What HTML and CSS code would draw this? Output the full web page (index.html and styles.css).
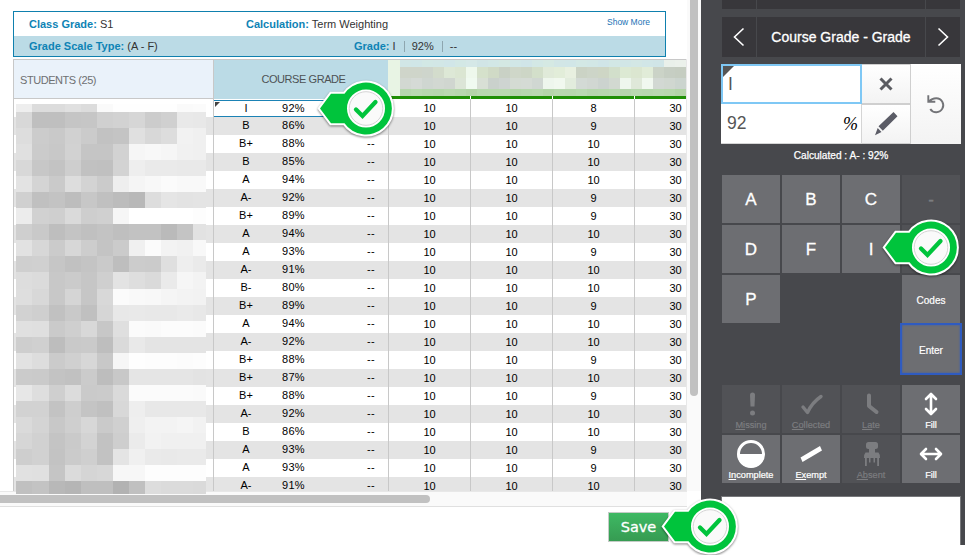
FILE: index.html
```html
<!DOCTYPE html>
<html lang="en">
<head>
    <meta charset="UTF-8">
    <meta name="viewport" content="width=device-width, initial-scale=1.0">
    <title>Gradebook</title>
    <link rel="stylesheet" href="styles.css">
</head>
<body>
    <svg class="defs" width="0" height="0">
        <symbol id="callout" viewBox="0 0 80 62">
            <path class="callout-edge" d="M4 30.500L15 15.700H28.500A26 26 0 1 1 28.500 45.300H15Z"/>
            <path class="callout-fill" d="M4 30.500L15 15.700H28.500A26 26 0 1 1 28.500 45.300H15Z"/>
            <circle cx="50" cy="30.500" r="17.800" fill="#fafafa" stroke="#fff" stroke-width="2.400"/>
            <circle cx="50" cy="30.500" r="16.800" fill="none" stroke="#d4d4d4" stroke-width="1"/>
            <path d="M40 31.500l6.500 6.500 13-14" fill="none" stroke="#00c43c" stroke-width="4.300" stroke-linecap="round"/>
        </symbol>
    </svg>

    <div class="page">
        <div class="gradebook">
            <div class="content">
                <div class="summary">
                    <div class="summary-row">
                        <div class="summary-left"><b>Class Grade:</b> S1</div>
                        <div class="summary-calc"><b>Calculation:</b> Term Weighting</div>
                        <a class="show-more">Show More</a>
                    </div>
                    <div class="summary-row shaded">
                        <div class="summary-scale"><b>Grade Scale Type:</b> (A - F)</div>
                        <div class="summary-grade"><b>Grade:</b> I <i></i> 92% <i></i> --</div>
                    </div>
                </div>

                <div class="grid">
                    <div class="students">
                        <div class="students-head">STUDENTS (25)</div>
                        <div class="students-body">
                            <div class="names" id="names"></div>
                        </div>
                    </div>
                    <div class="course">
                        <div class="course-head">COURSE GRADE</div>
                        <div class="rows" id="courseRows"></div>
                    </div>
                    <div class="scores">
                        <div class="scores-head" id="assignments"></div>
                        <div class="bars"><span></span><span></span><span></span><span></span></div>
                        <div class="rows" id="scoreRows"></div>
                    </div>
                    <div class="grid-edge"></div>
                </div>
            </div>
            <div class="scroll-y"><div class="thumb-y"></div></div>
            <div class="scroll-x"><div class="thumb-x"></div></div>
            <div class="footer">
                <button class="save">Save</button>
            </div>
        </div>

        <div class="scoring">
            <div class="nav nav-top"><span></span><span></span><span></span></div>
            <div class="nav">
                <span><svg width="12" height="20" viewBox="0 0 12 20"><path d="M10.500 1.500L1.500 10l9 8.500"/></svg></span>
                <span class="nav-title">Course Grade - Grade</span>
                <span><svg width="12" height="20" viewBox="0 0 12 20"><path d="M1.500 1.500L10.500 10l-9 8.500"/></svg></span>
            </div>

            <div class="entry">
                <div class="field active">I</div>
                <div class="tool">
                    <svg width="14" height="14" viewBox="0 0 14 14"><path d="M1.500 1.500l11 11M12.500 1.500l-11 11" stroke="#5b5c61" stroke-width="3"/></svg>
                </div>
                <div class="tool undo">
                    <svg width="20" height="20" viewBox="0 0 20 20"><path d="M2.300 1.300v6.500h7M3 7.600C5 5.200 8 4.200 10.300 4.200a7 7 0 1 1-6 10.700" fill="none" stroke="#737478" stroke-width="1.900"/></svg>
                </div>
                <div class="field">92<span class="percent">%</span></div>
                <div class="tool">
                    <svg width="24" height="24" viewBox="0 0 24 24"><path d="M19.500 0L23.500 4.300 8.800 18.700 4.500 14.300zM3.700 16l3.800 3.900L1 23.300z" fill="#5b5c66"/></svg>
                </div>
            </div>

            <div class="calculated">Calculated : A- : 92%</div>

            <div class="keys">
                <div class="key">A</div>
                <div class="key">B</div>
                <div class="key">C</div>
                <div class="key off">-</div>
                <div class="key">D</div>
                <div class="key">F</div>
                <div class="key">I</div>
                <div class="key off"></div>
                <div class="key">P</div>
                <div class="key-gap"></div>
                <div class="key small">Codes</div>
                <div class="key-gap wide"></div>
                <div class="key small focused">Enter</div>
            </div>

            <div class="keys flags">
                <div class="key flag off">
                    <svg viewBox="0 0 30 30"><path d="M14 6a2.500 2.500 0 0 1 5 0l-.5 11.500h-4z"/><circle cx="16.500" cy="24" r="2.500"/></svg>
                    <span><u>Mi</u>ssing</span>
                </div>
                <div class="key flag off">
                    <svg viewBox="0 0 30 30"><path class="line" d="M7 18l4.500 5.500C14.500 17 19 11.500 25 7.500" stroke-width="3.400"/></svg>
                    <span><u>Co</u>llected</span>
                </div>
                <div class="key flag off">
                    <svg viewBox="0 0 30 30"><path class="line" d="M13 6.500v10.500l7.500 6" stroke-width="4"/></svg>
                    <span><u>La</u>te</span>
                </div>
                <div class="key flag">
                    <svg viewBox="0 0 30 30"><path class="line" d="M15 6v18M10 10l5-5 5 5M10 20l5 5 5-5" stroke-width="2.600"/></svg>
                    <span>Fill</span>
                </div>
                <div class="key flag">
                    <svg viewBox="0 0 30 30"><circle cx="15" cy="15" r="12.500" fill="none" stroke="currentColor" stroke-width="3"/><path d="M1.500 15h27a13.500 13.500 0 0 1-27 0z"/></svg>
                    <span><u>In</u>complete</span>
                </div>
                <div class="key flag">
                    <svg viewBox="0 0 30 30"><path d="M4.500 18.500L24 7l2 4.500L6.500 23z"/></svg>
                    <span><u>Ex</u>empt</span>
                </div>
                <div class="key flag off">
                    <svg viewBox="0 0 30 30"><rect x="10" y="3" width="12" height="7" rx="2.500"/><path d="M13 9h6v4.500h3.500Q24 15 24 19h-1v8h-1.800v-8H19v4.500h-1.500V19h-3v4.500H13V19h-2.200v8H9v-8H8q0-4 1.500-5.500H13z"/></svg>
                    <span><u>Ab</u>sent</span>
                </div>
                <div class="key flag">
                    <svg viewBox="0 0 30 30"><path class="line" d="M6 15h18M10 10l-5 5 5 5M20 10l5 5-5 5" stroke-width="2.600"/></svg>
                    <span>Fill</span>
                </div>
            </div>

            <div class="comment"></div>
        </div>
    </div>

    <!-- step callouts -->
    <svg class="callout step-grade"><use href="#callout"/></svg>
    <svg class="callout step-key"><use href="#callout"/></svg>
    <svg class="callout step-save"><use href="#callout"/></svg>

    <script>
        const grades = [
            ['I', 92, 8], ['B', 86, 9], ['B+', 88, 10], ['B', 85, 10], ['A', 94, 10],
            ['A-', 92, 9], ['B+', 89, 9], ['A', 94, 10], ['A', 93, 9], ['A-', 91, 10],
            ['B-', 80, 10], ['B+', 89, 9], ['A', 94, 10], ['A-', 92, 10], ['B+', 88, 9],
            ['B+', 87, 10], ['B+', 88, 9], ['A-', 92, 10], ['B', 86, 10], ['A', 93, 9],
            ['A', 93, 9], ['A-', 91, 10]
        ];

        document.getElementById('courseRows').innerHTML = grades.map(([letter, pct], i) =>
            `<div class="row ${i === 0 ? 'selected' : ''}">
                <span class="letter">${letter}</span><span class="pct">${pct}%</span><span class="dash">--</span>
            </div>`).join('');

        document.getElementById('scoreRows').innerHTML = grades.map(row =>
            `<div class="row"><span>10</span><span>10</span><span>${row[2]}</span><span>30</span></div>`).join('');

        // Student names are masked, one grey level per tile
        const nameTiles = [
            'ee dc dc e0 dc fa fe fe fe fe fa fb',
            'd8 bf bf c5 c6 d0 d2 d6 cc d0 e9 e8',
            'dd cc c9 d1 cb c2 c4 e0 d8 dd f2 f0',
            'e0 cb c8 d2 c5 c5 d2 f6 f8 f6 f1 f0',
            'd8 c7 c3 ce c1 c0 d3 ee ea ea e9 e9',
            'e3 d4 ca dd d3 cb ee f5 f8 fb f9 f9',
            'd0 c0 c3 bd c7 c0 bc b8 dd e5 e3 e4',
            'ec d1 cf da ce d0 f6 ff ff ff ff fd',
            'cf c9 be c4 c0 c3 bf c2 c2 ba c4 e2',
            'e2 d7 cb d7 cd c4 cb f0 fb f3 f1 f8',
            'cf d0 c6 c1 c4 ca be cc cb df ee ea',
            'dd db c8 cb c6 cf e3 de da ea f6 f3',
            'de d8 c8 d5 c6 d8 fb f9 f8 f5 f3 f2',
            'd2 cf c1 c9 c0 d6 e8 e9 e8 e8 ea e8',
            'e0 df ca cf d8 c7 df fb fa fc fc fb',
            'ce d0 bd c9 ca be da e9 e4 e4 e4 e4',
            'e2 dd cb d0 d7 c8 f6 fe fd fd fc fd',
            'cb ca c3 c1 cb bd c8 e5 e5 e5 e5 e3',
            'e7 de cf dc ca cb da fb fb fb fb fa',
            'd2 d2 c3 ce c4 c0 d8 ee e8 e8 e8 e8',
            'da d4 c8 cf d7 ca d0 ef f3 f3 f5 f2',
            'd6 d1 c4 ca d3 c2 ce eb f2 f0 f0 f0',
            'ce d1 c3 cb cf c2 e4 f0 ea e9 ea ea',
            'e1 e0 c5 db d5 d7 f7 f7 fd fd fd fd',
            'c0 c3 b8 b5 bf bf b2 c0 dd db db da'
        ];
        document.getElementById('names').innerHTML = nameTiles.join(' ').split(' ')
            .map(g => `<i style="background:#${g}${g}${g}"></i>`).join('');

        // Assignment titles, masked the same way
        const titleTiles = [
            'e8f4e4 d1e6e6 d0e6e7 d2e8e5 d2e7e6 d1e6e8 d3e8e5 d5e8e7 d1e5e6 d2e7e6 d4e8e3 d1e7e7 d0e5e8 d3e8e5 d5e9e3 d2e6e6 d1e6e7 d3e8e5 d2e7e6 d0e5e8 d2e7e5 d1e6e6 d3e7e5 d1e6e7 d0e5e7 e9f0ea ebf1eb',
            'e8f4e4 cfd5ca cfd5ca ced5cc d3dccc dde8d6 dbe6d2 eef8ec d5e1cb d0dac6 c9d1c5 cfd7c9 cdd6c6 d3dfca e0ead9 e2edd9 e8f0e0 cbd3c5 cdd5c8 ced6c5 d2dfcb dce9d3 dbe6d0 e1ecd8 cbd3c7 c6cec3 c5cdc1',
            'e8f4e4 d2d8d2 d5dad6 cfd6d1 d2d8d2 d0d6d0 dce5d7 f0faf0 d8dfd5 cad1cc ced4d1 d4dbd3 d5dbd5 d0d7d2 eef6ed f1f8ef e2ecdd d3dad5 d1d7d2 ccd3cf d2d9d1 eef6ed dfe8d9 f1f8f0 d2d8d3 d0d7d0 cbd4ce',
            'e8f4e4 b7d6ae bad9b1 b7d7ae b6d6ad bad8b1 b7d7ae b4d4a9 b8d8af b9d8b0 b9d9b0 b6d5ac b7d7ae b9d8b0 b5d5ab b8d8af b8d7af bad9b2 b6d6ad b7d7ae b9d8b1 b5d4ac b8d8af b7d7ae b9d8b0 b8d7ad b4d4a8'
        ];
        document.getElementById('assignments').innerHTML = titleTiles.join(' ').split(' ')
            .map(c => `<i style="background:#${c}"></i>`).join('');
    </script>
</body>
</html>
```
FILE: styles.css
```css
* {
    box-sizing: border-box;
}

body {
    margin: 0;
    background: #fff;
    font-family: "Liberation Sans", Arial, sans-serif;
    font-size: 11px;
    color: #333;
    overflow: hidden;
}

.defs {
    display: block;
}

.page {
    display: flex;
    width: 965px;
    height: 555px;
}

/* Gradebook */
.gradebook {
    width: 701px;
    height: 555px;
    display: grid;
    grid-template-columns: 687px 14px;
    grid-template-rows: 491px 15px 49px;
}

.content {
    padding: 11px 0 0 13px;
    min-width: 0;
}

.summary {
    width: 653px;
    height: 46px;
    border: 1px solid #0f80ae;
}

.summary b {
    color: #0e83b5;
}

.summary-row {
    height: 24px;
    padding: 0 15px;
    display: flex;
    line-height: 25px;
    white-space: nowrap;
}

.summary-left {
    width: 217px;
}

.summary-calc {
    flex: 1;
}

.show-more {
    font-size: 8.500px;
    line-height: 20px;
    color: #2273b5;
}

.summary-row.shaded {
    height: 20px;
    line-height: 20px;
    background: #bbdbe6;
}

.summary-scale {
    width: 325px;
}

.summary-grade i {
    display: inline-block;
    height: 11px;
    margin: 0 4px 0 5px;
    border-left: 1px solid #8ea6af;
    vertical-align: -2px;
}

.grid {
    display: flex;
    height: 432px;
    margin-top: 2px;
}

.students {
    width: 200px;
    border-left: 1px solid #c8c8c8;
}

.students-head {
    height: 40px;
    padding-left: 6px;
    border-top: 1px solid #c8c8c8;
    border-bottom: 1px solid #c8c8c8;
    background: #eaf2fa;
    color: #6e7072;
    letter-spacing: -0.45px;
    line-height: 41px;
}

.students-body {
    height: 392px;
    padding: 5px 0 0 2px;
    background: repeating-linear-gradient(#fff 0 18px, #e4e4e4 18px 36px);
}

.names {
    display: grid;
    grid-template-columns: 16px 17px repeat(9, 16px) 13px;
    grid-template-rows: 8px repeat(23, 16.05px) 13px;
    position: relative;
    z-index: 1;
}

.course {
    width: 175px;
    border-left: 1px solid #c8c8c8;
}

.course-head {
    height: 40px;
    padding-left: 5px;
    border-top: 1px solid #c8c8c8;
    background: #bbdbe6;
    color: #4d5254;
    letter-spacing: -0.43px;
    line-height: 39px;
    text-align: center;
}

.rows {
    height: 392px;
    overflow: hidden;
    color: #000;
}

.row {
    display: flex;
    height: 18px;
    line-height: 18px;
    text-align: center;
}

.row:nth-child(even) {
    background: #e4e4e4;
}

.course .row {
    line-height: 17px;
}

.course .row.selected {
    position: relative;
    height: 17px;
    margin: 1px 0 0 -1px;
    border: 1px solid #1b82b5;
    line-height: 15px;
}

.selected::before {
    content: "";
    position: absolute;
    left: 1px;
    top: 1px;
    border-top: 5px solid #444;
    border-right: 5px solid transparent;
}

.letter {
    width: 64px;
}

.pct {
    width: 31px;
    letter-spacing: 0.3px;
}

.dash {
    width: 124px;
    letter-spacing: 0.4px;
}

.course .row {
    overflow: hidden;
}

.course .row span {
    flex: none;
}

.scores {
    width: 298px;
    overflow: hidden;
}

.scores-head {
    display: grid;
    grid-template-columns: 12px repeat(26, 11px);
    grid-template-rows: 7px 11px 11px 7px;
    height: 37px;
    border-top: 1px solid #c8c8c8;
}

.bars {
    display: flex;
    height: 3px;
}

.bars span {
    flex: none;
    width: 82px;
    border-left: 1px solid #fff;
    background: #1f8f05;
}

.scores .row span {
    flex: none;
    width: 82px;
    border-left: 1px solid #c8c8c8;
}

.grid-edge {
    width: 1px;
    background: #e8e8e8;
}

.scroll-y {
    padding-left: 3px;
    background: #fafafa;
}

.thumb-y {
    width: 8px;
    height: 396px;
    border-radius: 0 0 4px 4px;
    background: #c1c1c1;
}

.scroll-x {
    height: 16px;
    padding-top: 3px;
    border-top: 1px solid #e8e8e8;
    border-bottom: 1px solid #e0e0e0;
    background: #fafafa;
}

.thumb-x {
    width: 430px;
    height: 8px;
    border-radius: 0 4px 4px 0;
    background: #c1c1c1;
}

.footer {
    grid-column: 1 / 3;
    padding: 6px 32px 0 0;
    display: flex;
    justify-content: flex-end;
    align-items: flex-start;
}

.save {
    width: 61px;
    height: 30px;
    padding: 0;
    border: 1px solid #c4ccc6;
    background: linear-gradient(#3eb963, #369b52);
    color: #fff;
    font: 14.500px "DejaVu Sans", sans-serif;
    -webkit-text-stroke: 0.3px #fff;
}

/* Scoring panel */
.scoring {
    width: 264px;
    height: 545px;
    padding-left: 20px;
    background: #47484c;
    color: #fff;
}

.nav {
    display: grid;
    grid-template-columns: 34px 168px 34px;
    gap: 1px;
    width: 238px;
    height: 40px;
    margin: 8px 0 0 1px;
}

.nav-top {
    height: 9px;
    margin-top: 0;
}

.nav span {
    display: flex;
    align-items: center;
    justify-content: center;
    background: #38373b;
}

.nav path {
    fill: none;
    stroke: #fff;
    stroke-width: 1.6;
}

.nav-title {
    font-size: 14px;
    -webkit-text-stroke: 0.3px #fff;
}

.entry {
    display: grid;
    grid-template-columns: 141px 49px 50px;
    grid-template-rows: 40px 40px;
    width: 240px;
    margin-top: 7px;
    background: #fff;
}

.field {
    position: relative;
    padding: 0 3px 0 6px;
    border: 1px solid #d5d5d5;
    border-width: 0 1px 1px 0;
    color: #555;
    font-size: 17.500px;
    line-height: 39px;
}

.field.active {
    padding-left: 5px;
    border: 2px solid #7fc8f5;
    line-height: 37px;
}

.active::before {
    content: "";
    position: absolute;
    left: 0;
    top: 0;
    border-top: 11px solid #555;
    border-right: 11px solid transparent;
}

.percent {
    float: right;
    color: #000;
    font: italic 18px/40px "Liberation Serif", serif;
}

.tool {
    display: flex;
    align-items: center;
    justify-content: center;
    border: 1px solid #cfcfcf;
    border-width: 1px 1px 1px 0;
    background: linear-gradient(#fff, #f3f3f3);
}

.undo {
    grid-row: 1 / 3;
    grid-column: 3;
    border: 0;
}

.calculated {
    height: 31px;
    width: 240px;
    font-size: 10.150px;
    line-height: 24px;
    text-align: center;
    -webkit-text-stroke: 0.25px #fff;
}

.keys {
    display: grid;
    grid-template-columns: repeat(4, 58px);
    grid-auto-rows: 48px;
    gap: 2px;
    margin-left: 1px;
}

.key {
    display: flex;
    align-items: center;
    justify-content: center;
    padding-top: 2px;
    background: #6d6e72;
    font-size: 17px;
    -webkit-text-stroke: 0.3px currentColor;
}

.key-gap {
    grid-column: span 2;
}

.key-gap.wide {
    grid-column: span 3;
}

.key.small {
    font-size: 10px;
    -webkit-text-stroke: 0.2px #fff;
}

.key.off {
    background: #515256;
    color: #7c7d80;
}

.key.focused {
    box-shadow: 0 0 0 2px #2f5bc0, inset 0 0 2px #2f5bc0;
}

.flags {
    margin-top: 12px;
}

.flag {
    flex-direction: column;
    justify-content: flex-start;
    padding-top: 4px;
    font-size: 9.200px;
    line-height: 12px;
    -webkit-text-stroke: 0.2px currentColor;
}

.flag svg {
    width: 30px;
    height: 30px;
    fill: currentColor;
}

.flag .line {
    fill: none;
    stroke: currentColor;
    stroke-linecap: round;
    stroke-linejoin: round;
}

.comment {
    width: 240px;
    height: 49px;
    margin-top: 13px;
    border: 1px solid #77787b;
    border-bottom: 0;
    background: #fff;
}

/* Callouts sit on top of everything */
.callout {
    position: absolute;
    z-index: 2;
    width: 80px;
    height: 62px;
    filter: drop-shadow(0 1px 1px rgba(0, 0, 0, 0.5));
}

.callout-edge {
    fill: #fff;
    stroke: #fff;
    stroke-width: 4;
}

.callout-fill {
    fill: #00c43c;
}

.step-grade {
    left: 316px;
    top: 77.5px;
}

.step-key {
    left: 881px;
    top: 217px;
}

.step-save {
    left: 660px;
    top: 496px;
}
```
